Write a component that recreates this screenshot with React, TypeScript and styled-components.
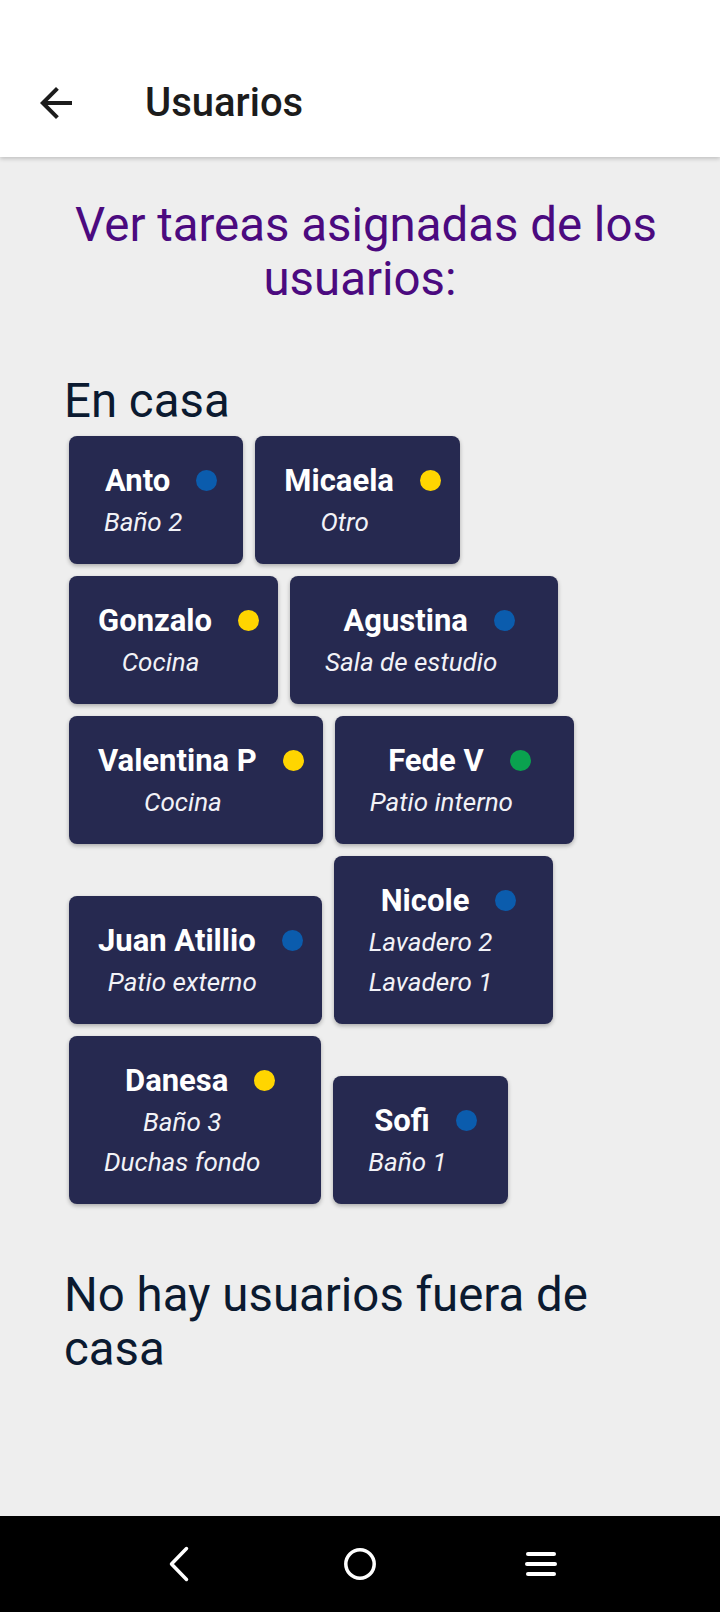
import React from "react";
import styled, { createGlobalStyle } from "styled-components";

const GlobalStyle = createGlobalStyle`
  html, body {
    margin: 0;
    padding: 0;
    background: #eeeeee;
    font-family: Roboto, "Noto Sans", Arial, sans-serif;
  }
  * { box-sizing: border-box; }
`;

const Screen = styled.div`
  display: flex;
  flex-direction: column;
  min-height: 1612px;
  background: #eeeeee;
`;

const Header = styled.header`
  display: flex;
  align-items: center;
  height: 157px;
  padding: 48px 0 0 32px;
  background: #ffffff;
  box-shadow: 0 2px 4px rgba(0, 0, 0, 0.18);
  position: relative;
  z-index: 1;
`;

const BackButton = styled.button`
  display: flex;
  align-items: center;
  justify-content: center;
  width: 48px;
  height: 48px;
  padding: 0;
  border: none;
  background: transparent;
  color: #1c1c1c;
`;

const Title = styled.h1`
  margin: 0 0 0 65px;
  font-family: Roboto, sans-serif;
  font-weight: 500;
  font-size: 40px;
  line-height: 48px;
  color: #1c1c1c;
`;

const Main = styled.main`
  flex: 1;
  display: flex;
  flex-direction: column;
  padding: 0 64px;
`;

const Heading = styled.h2`
  margin: 41px -20px 0;
  font-family: Roboto, sans-serif;
  font-weight: 400;
  font-size: 47.4px;
  line-height: 54px;
  text-align: center;
  text-indent: 12px;
  color: #4b0a7f;
`;

const SectionTitle = styled.h3<{ $top: number }>`
  margin: ${(p) => p.$top}px 0 2px;
  font-family: Roboto, sans-serif;
  font-weight: 400;
  font-size: 47.4px;
  line-height: 54px;
  color: #0b1a30;
`;

const CardList = styled.div`
  display: flex;
  flex-wrap: wrap;
  align-items: flex-end;
  margin: 0 -6px 0 -1px;
`;

const Card = styled.div`
  display: flex;
  flex-direction: column;
  align-items: center;
  margin: 6px;
  padding: 27px 19px 26px;
  background: #262950;
  border-radius: 8px;
  box-shadow: 0 2px 4px rgba(0, 0, 0, 0.28);
`;

const NameRow = styled.div`
  display: flex;
  align-items: center;
  gap: 26px;
  height: 35px;
  margin-left: 10px;
`;

const Name = styled.span`
  font-family: Roboto, sans-serif;
  font-weight: 700;
  font-size: 31px;
  line-height: 35px;
  color: #ffffff;
  white-space: nowrap;
`;

const Dot = styled.span<{ $color: string }>`
  width: 21px;
  height: 21px;
  border-radius: 50%;
  background: ${(p) => p.$color};
  flex-shrink: 0;
`;

const Task = styled.span`
  margin: 8px 42px 0 16px;
  font-family: Roboto, sans-serif;
  font-style: italic;
  font-weight: 400;
  font-size: 26px;
  line-height: 32px;
  color: #f2f2f7;
  white-space: nowrap;
`;

const NavBar = styled.nav`
  display: flex;
  align-items: center;
  justify-content: center;
  gap: 141px;
  height: 96px;
  background: #000000;
`;

const NavIcon = styled.svg`
  width: 40px;
  height: 40px;
  display: block;
`;

const BLUE = "#0b5cad";
const YELLOW = "#ffd500";
const GREEN = "#0aa24f";

type User = { name: string; color: string; tasks: string[] };

const users: User[] = [
  { name: "Anto", color: BLUE, tasks: ["Baño 2"] },
  { name: "Micaela", color: YELLOW, tasks: ["Otro"] },
  { name: "Gonzalo", color: YELLOW, tasks: ["Cocina"] },
  { name: "Agustina", color: BLUE, tasks: ["Sala de estudio"] },
  { name: "Valentina P", color: YELLOW, tasks: ["Cocina"] },
  { name: "Fede V", color: GREEN, tasks: ["Patio interno"] },
  { name: "Juan Atillio", color: BLUE, tasks: ["Patio externo"] },
  { name: "Nicole", color: BLUE, tasks: ["Lavadero 2", "Lavadero 1"] },
  { name: "Danesa", color: YELLOW, tasks: ["Baño 3", "Duchas fondo"] },
  { name: "Sofi", color: BLUE, tasks: ["Baño 1"] },
];

export default function App() {
  return (
    <>
      <GlobalStyle />
      <Screen>
        <Header>
          <BackButton aria-label="Volver">
            <svg width="48" height="48" viewBox="0 0 24 24" fill="currentColor">
              <path d="M20 11H7.83l5.59-5.59L12 4l-8 8 8 8 1.41-1.41L7.83 13H20v-2z" />
            </svg>
          </BackButton>
          <Title>Usuarios</Title>
        </Header>
        <Main>
          <Heading>Ver tareas asignadas de los usuarios:</Heading>
          <SectionTitle $top={68}>En casa</SectionTitle>
          <CardList>
            {users.map((u) => (
              <Card key={u.name}>
                <NameRow>
                  <Name>{u.name}</Name>
                  <Dot $color={u.color} />
                </NameRow>
                {u.tasks.map((t) => (
                  <Task key={t}>{t}</Task>
                ))}
              </Card>
            ))}
          </CardList>
          <SectionTitle $top={58}>No hay usuarios fuera de casa</SectionTitle>
        </Main>
        <NavBar>
          <NavIcon viewBox="0 0 40 40" fill="none" stroke="#fff" strokeWidth="3.5" strokeLinecap="round" strokeLinejoin="round">
            <polyline points="27.5,4.5 12.5,20 27.5,35.5" />
          </NavIcon>
          <NavIcon viewBox="0 0 40 40" fill="none" stroke="#fff" strokeWidth="3.5">
            <circle cx="20" cy="20" r="14.2" />
          </NavIcon>
          <NavIcon viewBox="0 0 40 40" fill="none" stroke="#fff" strokeWidth="4" strokeLinecap="round">
            <line x1="7" y1="10" x2="33" y2="10" />
            <line x1="6" y1="20" x2="34" y2="20" />
            <line x1="7" y1="30" x2="33" y2="30" />
          </NavIcon>
        </NavBar>
      </Screen>
    </>
  );
}
